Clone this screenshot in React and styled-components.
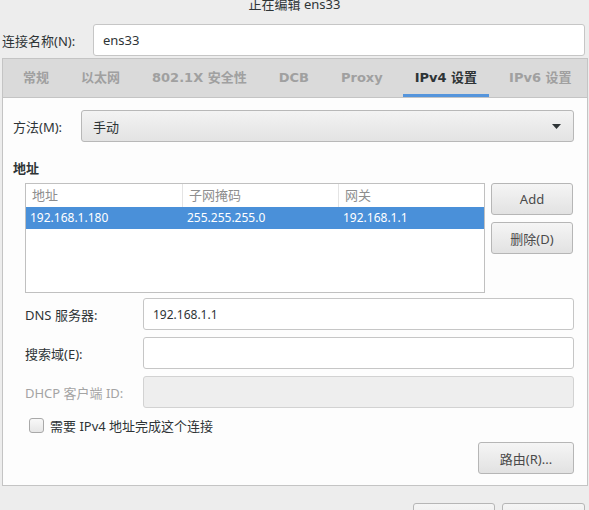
import styled, { createGlobalStyle } from "styled-components";

const GlobalStyle = createGlobalStyle`
  body {
    margin: 0;
    background: #ededed;
    font-family: "Noto Sans", "Noto Sans CJK SC", sans-serif;
    font-size: 13px;
    color: #2e3436;
    overflow: hidden;
  }
`;

const tabs = ["常规", "以太网", "802.1X 安全性", "DCB", "Proxy", "IPv4 设置", "IPv6 设置"];

const rows = [["192.168.1.180", "255.255.255.0", "192.168.1.1"]];

function App() {
  return (
    <>
      <GlobalStyle />
      <Window>
        <TitleBar>正在编辑 ens33</TitleBar>

        <NameRow>
          <NameLabel>连接名称(N):</NameLabel>
          <TextInput defaultValue="ens33" />
        </NameRow>

        <Notebook>
          <TabBar>
            {tabs.map((t) => (
              <Tab key={t} active={t === "IPv4 设置"}>
                {t}
              </Tab>
            ))}
          </TabBar>

          <Panel>
            <MethodRow>
              <MethodLabel>方法(M):</MethodLabel>
              <Combo>
                <span>手动</span>
                <svg width="9" height="5" viewBox="0 0 9 5">
                  <path d="M0 0 H9 L4.5 5 Z" fill="#2e3436" />
                </svg>
              </Combo>
            </MethodRow>

            <SectionTitle>地址</SectionTitle>

            <AddressArea>
              <Table>
                <HeadRow>
                  <HeadCell width="157px">地址</HeadCell>
                  <HeadCell width="156px">子网掩码</HeadCell>
                  <HeadCell last>网关</HeadCell>
                </HeadRow>
                {rows.map((r) => (
                  <SelectedRow key={r[0]}>
                    <Cell width="157px">{r[0]}</Cell>
                    <Cell width="156px">{r[1]}</Cell>
                    <Cell>{r[2]}</Cell>
                  </SelectedRow>
                ))}
              </Table>
              <SideButtons>
                <Button>Add</Button>
                <Button>删除(D)</Button>
              </SideButtons>
            </AddressArea>

            <FormGrid>
              <FieldLabel>DNS 服务器:</FieldLabel>
              <TextInput small defaultValue="192.168.1.1" />
              <FieldLabel>搜索域(E):</FieldLabel>
              <TextInput />
              <FieldLabel disabled>DHCP 客户端 ID:</FieldLabel>
              <TextInput disabled />
            </FormGrid>

            <CheckRow>
              <CheckBox />
              <span>需要 IPv4 地址完成这个连接</span>
            </CheckRow>

            <RouteRow>
              <Button width="96px">路由(R)...</Button>
            </RouteRow>
          </Panel>
        </Notebook>

        {/* dialog action buttons, their labels fall below the window edge */}
        <Footer>
          <Button width="82px" aria-label="取消(C)" />
          <Button width="83px" aria-label="保存(S)" />
        </Footer>
      </Window>
    </>
  );
}

const Window = styled.div`
  width: 589px;
  height: 510px;
  overflow: hidden;
`;

const TitleBar = styled.div`
  height: 12px;
  line-height: 8px;
  text-align: center;
  color: #2e3436;
  overflow: visible;
`;

const NameRow = styled.div`
  display: flex;
  align-items: center;
  height: 32px;
  margin-top: 12px;
  padding: 0 4px 0 2px;
`;

const NameLabel = styled.label`
  width: 91px;
  flex: none;
`;

const TextInput = styled.input`
  flex: 1;
  min-width: 0;
  height: 32px;
  box-sizing: border-box;
  border: 1px solid #c6c6c6;
  border-radius: 3px;
  padding: 0 9px;
  font-family: inherit;
  font-size: ${(p) => (p.small ? "12px" : "13px")};
  color: #2e3436;
  background: ${(p) => (p.disabled ? "#eeeeee" : "#ffffff")};
  border-color: ${(p) => (p.disabled ? "#d2d2d2" : "#c6c6c6")};
  outline: none;
`;

const Notebook = styled.div`
  margin: 2px 1px 0 2px;
  border: 1px solid #c4c4c4;
  border-bottom: none;
`;

const TabBar = styled.div`
  display: flex;
  height: 38px;
  padding-left: 4px;
  background: #dadada;
  border-bottom: 1px solid #c4c4c4;
`;

const Tab = styled.div`
  padding: 0 12px;
  margin: 0 4px;
  line-height: 38px;
  font-family: "DejaVu Sans", "Noto Sans CJK SC", sans-serif;
  font-weight: bold;
  white-space: nowrap;
  color: ${(p) => (p.active ? "#2e3436" : "#a0a0a0")};
  box-shadow: ${(p) => (p.active ? "inset 0 -3px 0 #5595dc" : "none")};
`;

const Panel = styled.div`
  height: 388px;
  box-sizing: border-box;
  padding: 12px 13px 0 10px;
  background: #fdfdfd;
  border-bottom: 1px solid #c4c4c4;
`;

const MethodRow = styled.div`
  display: flex;
  align-items: center;
  height: 32px;
`;

const MethodLabel = styled.label`
  width: 68px;
  flex: none;
`;

const Combo = styled.div`
  flex: 1;
  height: 32px;
  box-sizing: border-box;
  display: flex;
  align-items: center;
  justify-content: space-between;
  padding: 0 12px 0 11px;
  border: 1px solid #b8b8b8;
  border-radius: 3px;
  background: linear-gradient(#f3f3f3, #e3e3e3);
`;

const SectionTitle = styled.div`
  margin-top: 17px;
  line-height: 18px;
  font-weight: bold;
`;

const AddressArea = styled.div`
  display: flex;
  margin-top: 6px;
  padding-left: 12px;
`;

const Table = styled.div`
  width: 460px;
  height: 110px;
  box-sizing: border-box;
  border: 1px solid #c0c0c0;
  background: #ffffff;
  font-size: 12px;
`;

const HeadRow = styled.div`
  display: flex;
  height: 23px;
`;

const HeadCell = styled.div`
  width: ${(p) => p.width || "auto"};
  flex: ${(p) => (p.width ? "none" : "1")};
  box-sizing: border-box;
  padding-left: 6px;
  line-height: 23px;
  font-size: 13px;
  color: #8e8e8e;
  border-right: ${(p) => (p.last ? "none" : "1px solid #e4e4e4")};
`;

const SelectedRow = styled.div`
  display: flex;
  height: 22px;
  background: #4a90d9;
  color: #ffffff;
`;

const Cell = styled.div`
  width: ${(p) => p.width || "auto"};
  flex: ${(p) => (p.width ? "none" : "1")};
  box-sizing: border-box;
  padding-left: 4px;
  line-height: 22px;
`;

const SideButtons = styled.div`
  display: flex;
  flex-direction: column;
  gap: 7px;
  margin-left: 6px;
  width: 82px;
`;

const Button = styled.button`
  width: ${(p) => p.width || "100%"};
  height: 32px;
  flex: none;
  box-sizing: border-box;
  border: 1px solid #b6b6b6;
  border-radius: 3px;
  background: linear-gradient(#f5f5f5, #e2e2e2);
  font-family: inherit;
  font-size: 13px;
  color: #4a4a4a;
  padding: 0;
`;

const FormGrid = styled.div`
  display: grid;
  grid-template-columns: 118px 1fr;
  grid-auto-rows: 32px;
  row-gap: 7px;
  align-items: center;
  margin-top: 5px;
  padding-left: 12px;
`;

const FieldLabel = styled.label`
  color: ${(p) => (p.disabled ? "#a4a4a4" : "#2e3436")};
`;

const CheckRow = styled.div`
  display: flex;
  align-items: center;
  gap: 6px;
  margin-top: 10px;
  padding-left: 16px;
  height: 15px;
`;

const CheckBox = styled.span`
  width: 15px;
  height: 15px;
  box-sizing: border-box;
  border: 1px solid #a9a9a9;
  border-radius: 3px;
  background: linear-gradient(#f8f8f8, #e6e6e6);
`;

const RouteRow = styled.div`
  display: flex;
  justify-content: flex-end;
  margin-top: 9px;
`;

const Footer = styled.div`
  display: flex;
  justify-content: flex-end;
  gap: 7px;
  padding: 17px 4px 0 0;
`;

export default App;
